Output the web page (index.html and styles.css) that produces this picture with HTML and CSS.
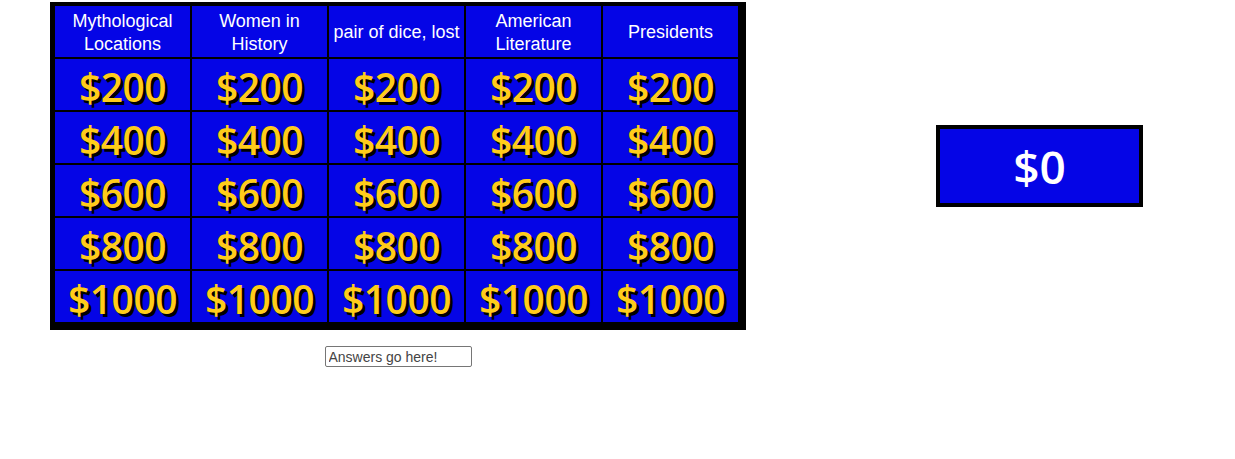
FILE: index.html
```html
<!DOCTYPE html>
<html>
<head>
<meta charset="utf-8">
<title>Jeopardy</title>
<link rel="stylesheet" href="styles.css">
</head>
<body>
<main class="page">
  <div class="top">
    <div class="board">
      <div class="cell head">Mythological Locations</div>
      <div class="cell head">Women in History</div>
      <div class="cell head">pair of dice, lost</div>
      <div class="cell head">American Literature</div>
      <div class="cell head">Presidents</div>
      <div class="cell money">$200</div><div class="cell money">$200</div><div class="cell money">$200</div><div class="cell money">$200</div><div class="cell money">$200</div>
      <div class="cell money">$400</div><div class="cell money">$400</div><div class="cell money">$400</div><div class="cell money">$400</div><div class="cell money">$400</div>
      <div class="cell money">$600</div><div class="cell money">$600</div><div class="cell money">$600</div><div class="cell money">$600</div><div class="cell money">$600</div>
      <div class="cell money">$800</div><div class="cell money">$800</div><div class="cell money">$800</div><div class="cell money">$800</div><div class="cell money">$800</div>
      <div class="cell money">$1000</div><div class="cell money">$1000</div><div class="cell money">$1000</div><div class="cell money">$1000</div><div class="cell money">$1000</div>
    </div>
    <div class="score">$0</div>
  </div>
  <div class="answer-row">
    <input class="answer" type="text" value="Answers go here!">
  </div>
</main>
</body>
</html>
```

FILE: styles.css
```css
html, body {
  margin: 0;
  padding: 0;
  background: #fff;
}

.page {
  padding: 2px 0 0 50px;
}

.top {
  display: flex;
  align-items: center;
  gap: 190px;
}

.board {
  display: grid;
  grid-template-columns: repeat(5, 135px);
  grid-auto-rows: 51px;
  gap: 2px;
  background: #000;
  border-style: solid;
  border-color: #000;
  border-width: 4px 8px 8px 5px;
  box-sizing: content-box;
}

.cell {
  background: #0505e6;
  display: flex;
  align-items: center;
  justify-content: center;
  text-align: center;
}

.head {
  color: #fff;
  font-family: "Liberation Sans", Arial, sans-serif;
  font-size: 18px;
  line-height: 23px;
  padding: 2px 2px 0;
}

.money {
  color: #ffcc1a;
  font-family: "Open Sans", sans-serif;
  font-size: 39px;
  font-weight: 600;
  text-shadow: 3px 3px 0 #000;
  letter-spacing: -0.5px;
  padding-top: 4px;
}

.score {
  width: 199px;
  height: 74px;
  border: 4px solid #000;
  background: #0505e6;
  color: #fff;
  font-family: "Open Sans", sans-serif;
  font-weight: 600;
  font-size: 46px;
  display: flex;
  align-items: center;
  justify-content: center;
}

.answer-row {
  width: 696px;
  display: flex;
  justify-content: center;
  padding-top: 16px;
}

.answer {
  width: 147px;
  height: 21px;
  box-sizing: border-box;
  border: 1px solid #767676;
  border-radius: 2px;
  padding: 1px 3px;
  font-family: "Liberation Sans", Arial, sans-serif;
  font-size: 14px;
  color: #444;
}
```
